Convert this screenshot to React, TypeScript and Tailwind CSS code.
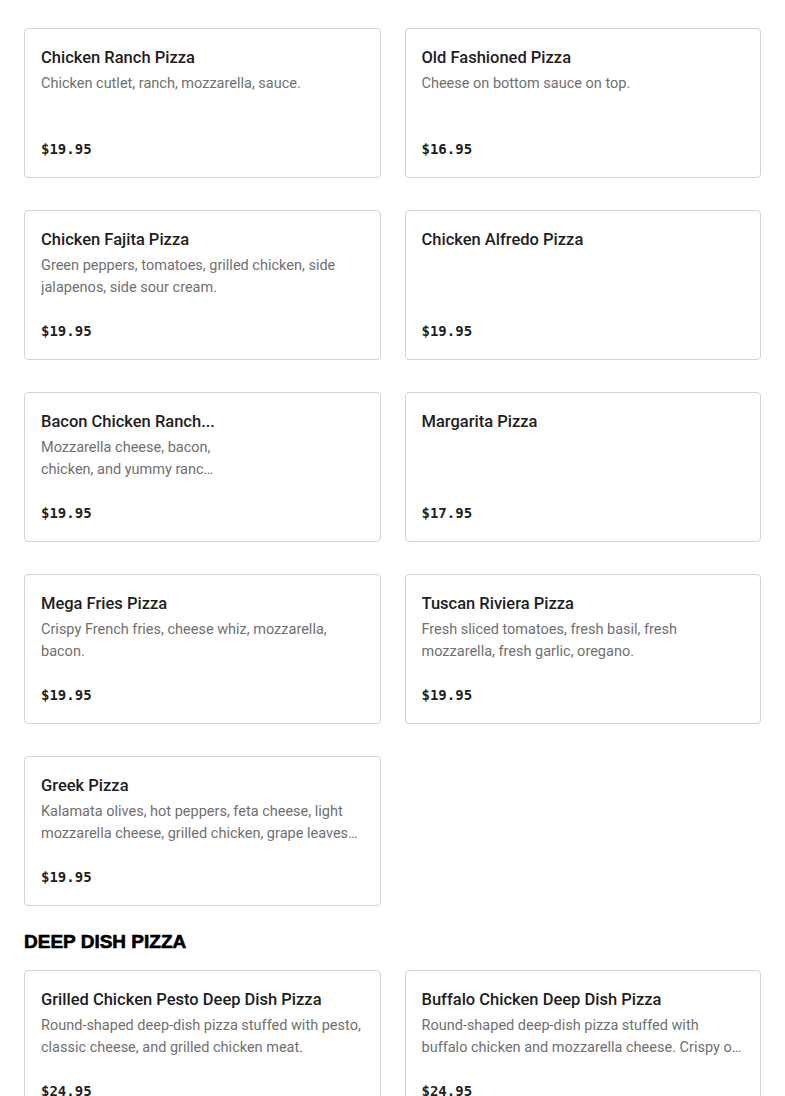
import React from "react";

type Item = { name: string; desc?: string; price: string; narrow?: boolean };

const pizzas: Item[] = [
  { name: "Chicken Ranch Pizza", desc: "Chicken cutlet, ranch, mozzarella, sauce.", price: "$19.95" },
  { name: "Old Fashioned Pizza", desc: "Cheese on bottom sauce on top.", price: "$16.95" },
  { name: "Chicken Fajita Pizza", desc: "Green peppers, tomatoes, grilled chicken, side jalapenos, side sour cream.", price: "$19.95" },
  { name: "Chicken Alfredo Pizza", price: "$19.95" },
  { name: "Bacon Chicken Ranch...", desc: "Mozzarella cheese, bacon, chicken, and yummy ranch dressing on top.", price: "$19.95", narrow: true },
  { name: "Margarita Pizza", price: "$17.95" },
  { name: "Mega Fries Pizza", desc: "Crispy French fries, cheese whiz, mozzarella, bacon.", price: "$19.95" },
  { name: "Tuscan Riviera Pizza", desc: "Fresh sliced tomatoes, fresh basil, fresh mozzarella, fresh garlic, oregano.", price: "$19.95" },
  { name: "Greek Pizza", desc: "Kalamata olives, hot peppers, feta cheese, light mozzarella cheese, grilled chicken, grape leaves and oregano.", price: "$19.95" },
];

const deepDish: Item[] = [
  { name: "Grilled Chicken Pesto Deep Dish Pizza", desc: "Round-shaped deep-dish pizza stuffed with pesto, classic cheese, and grilled chicken meat.", price: "$24.95" },
  { name: "Buffalo Chicken Deep Dish Pizza", desc: "Round-shaped deep-dish pizza stuffed with buffalo chicken and mozzarella cheese. Crispy on the outside, gooey inside.", price: "$24.95" },
];

function Card({ item }: { item: Item }) {
  return (
    <div className="h-[150px] rounded-[4px] border border-[#d3d3d3] bg-white px-4 pt-[17px] pb-4 flex">
      <div className={item.narrow ? "w-[180px] flex flex-col" : "flex-1 min-w-0 flex flex-col"}>
        <div className="truncate text-[16.5px] leading-6 font-medium text-[#1e1e1e]">
          {item.name}
        </div>
        <div className="mt-1 h-[44px] text-[14.5px] leading-[22px] text-[#707070] line-clamp-2">
          {item.desc ?? ""}
        </div>
        <div
          className="mt-5 pt-[1px] text-[14px] leading-6 font-bold text-[#1e1e1e]"
          style={{ fontFamily: '"DejaVu Sans Mono", "Liberation Mono", monospace' }}
        >
          {item.price}
        </div>
      </div>
    </div>
  );
}

export default function App() {
  return (
    <div
      className="bg-white min-h-screen px-6 pt-[28px] pb-10"
      style={{ fontFamily: 'Roboto, "Noto Sans", sans-serif' }}
    >
      <div className="grid grid-cols-2 gap-x-6 gap-y-8">
        {pizzas.map((p) => (
          <Card key={p.name} item={p} />
        ))}
      </div>
      <h2
        className="mt-6 mb-4 h-6 text-[19px] leading-6 font-black text-black [-webkit-text-stroke:0.6px_black]"
        style={{ fontFamily: '"Liberation Sans", Arial, sans-serif' }}
      >
        DEEP DISH PIZZA
      </h2>
      <div className="grid grid-cols-2 gap-x-6 gap-y-8">
        {deepDish.map((p) => (
          <Card key={p.name} item={p} />
        ))}
      </div>
    </div>
  );
}
